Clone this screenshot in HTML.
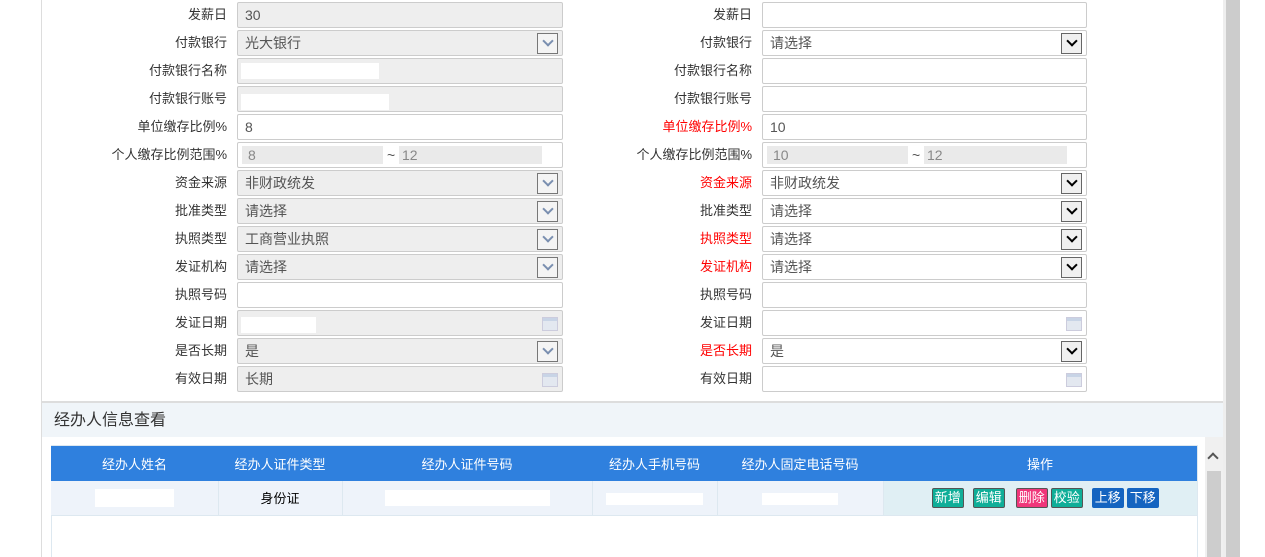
<!DOCTYPE html>
<html><head><meta charset="utf-8"><style>
*{box-sizing:border-box;margin:0;padding:0}
body{width:1265px;height:557px;overflow:hidden;background:#fff;font-family:"Liberation Sans","Noto Sans CJK SC",sans-serif;position:relative}
.a{position:absolute}
.l{position:absolute;width:200px;text-align:right;font-size:13px;color:#333;line-height:26px;height:26px}
.r{color:#f00}
.i{position:absolute;height:26px;border:1px solid #ccc;border-radius:2px;background:#fff;font-size:14px;color:#555;line-height:24px;padding-left:7px}
.d{background:#eee}
.L{left:237px;width:326px}.R{left:762px;width:325px}
.s::after{content:"";position:absolute;right:4px;top:2px;width:19px;height:19px;border:1px solid #777;background:#f4f4f4}
.s::before{content:"";position:absolute;right:10px;top:6px;width:6px;height:6px;border-right:2px solid #7a8fb0;border-bottom:2px solid #7a8fb0;transform:rotate(45deg);z-index:2}
.R.s::before{border-color:#000}
.R.s::after{border-color:#666;background:#f0f0f0}
.c::after{content:"";position:absolute;right:4px;top:6px;width:14px;height:12px;background:linear-gradient(#c8d4e6 0 3px,#e3e8f0 3px);border:1px solid #ccd}
.w{position:absolute;background:#fff;height:16px;top:4px}
.g{position:absolute;background:#eaeaea;height:18px;top:3px;font-size:14px;color:#888;line-height:18px;padding-left:6px}
th{background:#2f80de;color:#fff;font-weight:normal;font-size:13px;height:35px}
td{height:34px;background:#eef3fa;text-align:center;font-size:13px;border-right:1px solid #dde8f0;border-bottom:1px solid #dde8f0}
.b{display:inline-block;color:#fff;font-size:13px;line-height:18px;padding:0 2px;border:1px solid #555;border-radius:2px;margin:0 3px;vertical-align:middle}
</style></head><body>
<div class="a" style="left:41px;top:0;width:1px;height:557px;background:#ddd"></div>
<div class="a" style="left:1223px;top:0;width:3px;height:557px;background:#eee"></div>
<div class="a" style="left:1226px;top:0;width:14px;height:557px;background:#ccc"></div>

<div class="l" style="left:27px;top:2px">发薪日</div><div class="i L d" style="top:2px">30</div>
<div class="l" style="left:27px;top:30px">付款银行</div><div class="i L d s" style="top:30px">光大银行</div>
<div class="l" style="left:27px;top:58px">付款银行名称</div><div class="i L d" style="top:58px"><div class="w" style="left:3px;width:138px"></div></div>
<div class="l" style="left:27px;top:86px">付款银行账号</div><div class="i L d" style="top:86px"><div class="w" style="left:3px;width:148px;top:7px"></div></div>
<div class="l" style="left:27px;top:114px">单位缴存比例%</div><div class="i L" style="top:114px">8</div>
<div class="l" style="left:27px;top:142px">个人缴存比例范围%</div><div class="i L" style="top:142px;padding:0"><div class="g" style="left:4px;width:141px">8</div><span class="a" style="left:149px;top:0;color:#555">~</span><div class="g" style="left:161px;width:143px;padding-left:3px">12</div></div>
<div class="l" style="left:27px;top:170px">资金来源</div><div class="i L d s" style="top:170px">非财政统发</div>
<div class="l" style="left:27px;top:198px">批准类型</div><div class="i L d s" style="top:198px">请选择</div>
<div class="l" style="left:27px;top:226px">执照类型</div><div class="i L d s" style="top:226px">工商营业执照</div>
<div class="l" style="left:27px;top:254px">发证机构</div><div class="i L d s" style="top:254px">请选择</div>
<div class="l" style="left:27px;top:282px">执照号码</div><div class="i L" style="top:282px"></div>
<div class="l" style="left:27px;top:310px">发证日期</div><div class="i L d c" style="top:310px"><div class="w" style="left:3px;width:75px;top:6px"></div></div>
<div class="l" style="left:27px;top:338px">是否长期</div><div class="i L d s" style="top:338px">是</div>
<div class="l" style="left:27px;top:366px">有效日期</div><div class="i L d c" style="top:366px">长期</div>

<div class="l" style="left:552px;top:2px">发薪日</div><div class="i R" style="top:2px"></div>
<div class="l" style="left:552px;top:30px">付款银行</div><div class="i R s" style="top:30px">请选择</div>
<div class="l" style="left:552px;top:58px">付款银行名称</div><div class="i R" style="top:58px"></div>
<div class="l" style="left:552px;top:86px">付款银行账号</div><div class="i R" style="top:86px"></div>
<div class="l r" style="left:552px;top:114px">单位缴存比例%</div><div class="i R" style="top:114px">10</div>
<div class="l" style="left:552px;top:142px">个人缴存比例范围%</div><div class="i R" style="top:142px;padding:0"><div class="g" style="left:4px;width:141px">10</div><span class="a" style="left:149px;top:0;color:#555">~</span><div class="g" style="left:161px;width:143px;padding-left:3px">12</div></div>
<div class="l r" style="left:552px;top:170px">资金来源</div><div class="i R s" style="top:170px">非财政统发</div>
<div class="l" style="left:552px;top:198px">批准类型</div><div class="i R s" style="top:198px">请选择</div>
<div class="l r" style="left:552px;top:226px">执照类型</div><div class="i R s" style="top:226px">请选择</div>
<div class="l r" style="left:552px;top:254px">发证机构</div><div class="i R s" style="top:254px">请选择</div>
<div class="l" style="left:552px;top:282px">执照号码</div><div class="i R" style="top:282px"></div>
<div class="l" style="left:552px;top:310px">发证日期</div><div class="i R c" style="top:310px"></div>
<div class="l r" style="left:552px;top:338px">是否长期</div><div class="i R s" style="top:338px">是</div>
<div class="l" style="left:552px;top:366px">有效日期</div><div class="i R c" style="top:366px"></div>

<div class="a" style="left:42px;top:401px;width:1181px;height:2px;background:#ddd"></div>
<div class="a" style="left:42px;top:403px;width:1181px;height:34px;background:#f0f5f9;font-size:16px;color:#333;line-height:36px;padding-left:12px">经办人信息查看</div>
<div class="a" style="left:51px;top:445px;width:1147px;height:112px;border:1px solid #dde8f0;border-bottom:none"></div>
<table class="a" style="left:51px;top:446px;width:1146px;border-collapse:collapse">
<tr><th style="width:167px">经办人姓名</th><th style="width:124px">经办人证件类型</th><th style="width:250px">经办人证件号码</th><th style="width:125px">经办人手机号码</th><th style="width:166px">经办人固定电话号码</th><th>操作</th></tr>
<tr><td><span style="display:inline-block;width:79px;height:18px;background:#fff;vertical-align:middle"></span></td><td style="color:#000">身份证</td><td><span style="display:inline-block;width:165px;height:16px;background:#fff;vertical-align:middle"></span></td><td><span style="display:inline-block;width:97px;height:12px;background:#fff;vertical-align:middle"></span></td><td><span style="display:inline-block;width:76px;height:12px;background:#fff;vertical-align:middle"></span></td>
<td style="background:#e0eff4;border-right:none;padding-left:10px"><span class="b" style="background:#0fae98">新增</span><span class="b" style="background:#0fae98;margin-left:6px">编辑</span><span class="b" style="background:#f0367a;margin-left:8px">删除</span><span class="b" style="background:#0fae98;margin-left:0">校验</span><span class="b" style="background:#1464c0;border-color:#1464c0;margin-left:6px">上移</span><span class="b" style="background:#1464c0;border-color:#1464c0;margin-left:0">下移</span></td></tr>
</table>
<div class="a" style="left:1205px;top:437px;width:18px;height:120px;background:#f0f0f0"></div>
<div class="a" style="left:1209px;top:454px;width:8px;height:8px;border-left:2px solid #555;border-top:2px solid #555;transform:rotate(45deg)"></div>
<div class="a" style="left:1207px;top:471px;width:14px;height:86px;background:#cdcdcd"></div>
</body></html>
